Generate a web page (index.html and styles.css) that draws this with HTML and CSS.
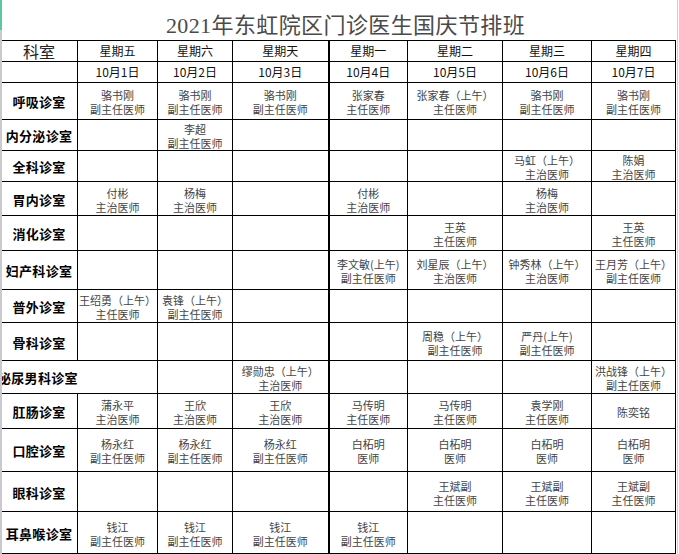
FILE: index.html
```html
<!DOCTYPE html>
<html lang="zh-CN">
<head>
<meta charset="utf-8">
<title>2021年东虹院区门诊医生国庆节排班</title>
<link rel="stylesheet" href="styles.css">
</head>
<body>
<div class="sheet">
  <div class="edge-left"></div>
  <div class="edge-right"></div>
  <h1 class="title">2021年东虹院区门诊医生国庆节排班</h1>
  <table class="grid">
    <colgroup>
      <col class="c0"><col class="c1"><col class="c2"><col class="c3"><col class="c4"><col class="c5"><col class="c6"><col class="c7">
    </colgroup>
    <tr class="r-head">
      <th class="h-dept">科室</th><th>星期五</th><th>星期六</th><th>星期天</th><th class="thick">星期一</th><th>星期二</th><th>星期三</th><th>星期四</th>
    </tr>
    <tr class="r-date">
      <th></th><th>10月1日</th><th>10月2日</th><th>10月3日</th><th class="thick">10月4日</th><th>10月5日</th><th>10月6日</th><th>10月7日</th>
    </tr>
    <tr class="r1">
      <td class="dept">呼吸诊室</td>
      <td>骆书刚<br>副主任医师</td><td>骆书刚<br>副主任医师</td><td>骆书刚<br>副主任医师</td>
      <td class="thick">张家春<br>主任医师</td><td>张家春（上午）<br>主任医师</td><td>骆书刚<br>副主任医师</td><td>骆书刚<br>副主任医师</td>
    </tr>
    <tr class="r2">
      <td class="dept">内分泌诊室</td>
      <td></td><td>李超<br>副主任医师</td><td></td><td class="thick"></td><td></td><td></td><td></td>
    </tr>
    <tr class="r3">
      <td class="dept">全科诊室</td>
      <td></td><td></td><td></td><td class="thick"></td><td></td><td>马虹（上午）<br>主治医师</td><td>陈娟<br>主治医师</td>
    </tr>
    <tr class="r4">
      <td class="dept">胃内诊室</td>
      <td>付彬<br>主治医师</td><td>杨梅<br>主治医师</td><td></td><td class="thick">付彬<br>主治医师</td><td></td><td>杨梅<br>主治医师</td><td></td>
    </tr>
    <tr class="r5">
      <td class="dept">消化诊室</td>
      <td></td><td></td><td></td><td class="thick"></td><td>王英<br>主任医师</td><td></td><td>王英<br>主任医师</td>
    </tr>
    <tr class="r6">
      <td class="dept">妇产科诊室</td>
      <td></td><td></td><td></td><td class="thick">李文敏(上午)<br>副主任医师</td><td>刘星辰（上午）<br>主治医师</td><td>钟秀林（上午）<br>主治医师</td><td>王月芳（上午）<br>副主任医师</td>
    </tr>
    <tr class="r7">
      <td class="dept">普外诊室</td>
      <td>王绍勇（上午）<br>主任医师</td><td>袁锋（上午）<br>副主任医师</td><td></td><td class="thick"></td><td></td><td></td><td></td>
    </tr>
    <tr class="r8">
      <td class="dept">骨科诊室</td>
      <td></td><td></td><td></td><td class="thick"></td><td>周稳（上午）<br>副主任医师</td><td>严丹(上午)<br>副主任医师</td><td></td>
    </tr>
    <tr class="r9">
      <td class="dept dept-wide" colspan="2"><span class="wide-text">泌尿男科诊室</span></td>
      <td></td><td>缪勋忠（上午）<br>主治医师</td><td class="thick"></td><td></td><td></td><td>洪战锋（上午）<br>副主任医师</td>
    </tr>
    <tr class="r10">
      <td class="dept">肛肠诊室</td>
      <td>蒲永平<br>主治医师</td><td>王欣<br>主治医师</td><td>王欣<br>主治医师</td><td class="thick">马传明<br>主任医师</td><td>马传明<br>主任医师</td><td>袁学刚<br>主任医师</td><td>陈奕铭</td>
    </tr>
    <tr class="r11">
      <td class="dept">口腔诊室</td>
      <td>杨永红<br>副主任医师</td><td>杨永红<br>副主任医师</td><td>杨永红<br>副主任医师</td><td class="thick">白柘明<br>医师</td><td>白柘明<br>医师</td><td>白柘明<br>医师</td><td>白柘明<br>医师</td>
    </tr>
    <tr class="r12">
      <td class="dept">眼科诊室</td>
      <td></td><td></td><td></td><td class="thick"></td><td>王斌副<br>主任医师</td><td>王斌副<br>主任医师</td><td>王斌副<br>主任医师</td>
    </tr>
    <tr class="r13">
      <td class="dept">耳鼻喉诊室</td>
      <td>钱江<br>副主任医师</td><td>钱江<br>副主任医师</td><td>钱江<br>副主任医师</td><td class="thick">钱江<br>副主任医师</td><td></td><td></td><td></td>
    </tr>
    <tr class="r14">
      <td></td><td></td><td></td><td></td><td class="thick"></td><td></td><td></td><td></td>
    </tr>
  </table>
</div>
</body>
</html>
```
FILE: styles.css
```css
html, body {
  margin: 0;
  padding: 0;
  background: #ffffff;
}
body {
  width: 679px;
  height: 554px;
  overflow: hidden;
  font-family: "Noto Sans CJK SC", "Noto Sans", sans-serif;
}
.sheet {
  position: relative;
  width: 679px;
  height: 554px;
  overflow: hidden;
}
.edge-left {
  position: absolute;
  left: 0;
  top: 0;
  width: 2px;
  height: 554px;
  background: linear-gradient(#5cc8a0 0, #5cc8a0 30px, #c9c9cf 30px);
  z-index: 2;
}
.edge-right {
  position: absolute;
  right: 1px;
  top: 0;
  width: 1px;
  height: 554px;
  background: #cfcfcf;
  z-index: 2;
}
.title {
  margin: 0;
  height: 40px;
  box-sizing: border-box;
  padding: 12px 0 0 12px;
  text-align: center;
  font-family: "Liberation Serif", "Noto Sans CJK SC", serif;
  font-weight: normal;
  font-size: 22px;
  line-height: 28px;
  color: #4a4a4a;
  letter-spacing: 0.4px;
}
.grid {
  border-collapse: collapse;
  table-layout: fixed;
  width: 676px;
}
.c0 { width: 77px; }
.c1 { width: 80px; }
.c2 { width: 75px; }
.c3 { width: 96px; }
.c4 { width: 79px; }
.c5 { width: 95px; }
.c6 { width: 89px; }
.c7 { width: 84px; }
.grid th, .grid td {
  border: 1px solid #000;
  padding: 0;
  text-align: center;
  vertical-align: middle;
  white-space: nowrap;
  overflow: visible;
}
.grid th {
  font-weight: normal;
  font-size: 12px;
  color: #111;
  line-height: 20px;
  height: 20px;
}
.grid th.h-dept {
  font-size: 16px;
  color: #222;
}
.grid td {
  font-size: 11px;
  line-height: 14px;
  color: #444;
  padding-top: 2px;
}
.grid .thick {
  border-left: 2px solid #000;
}
.grid td.dept {
  font-size: 13px;
  font-weight: bold;
  color: #000;
  letter-spacing: 0.3px;
}
.grid td.dept-wide {
  text-align: left;
}
.wide-text {
  display: inline-block;
  margin-left: -3px;
}
.r1 td { height: 34px; }
.r2 td { height: 27px; }
.r3 td { height: 28px; }
.r4 td { height: 31px; }
.r5 td { height: 32px; }
.r6 td { height: 36px; }
.r7 td { height: 30px; }
.r8 td { height: 35px; }
.r9 td { height: 30px; }
.r10 td { height: 32px; }
.r11 td { height: 40px; }
.r12 td { height: 37px; }
.r13 td { height: 39px; }
.r14 td { height: 20px; }
```
